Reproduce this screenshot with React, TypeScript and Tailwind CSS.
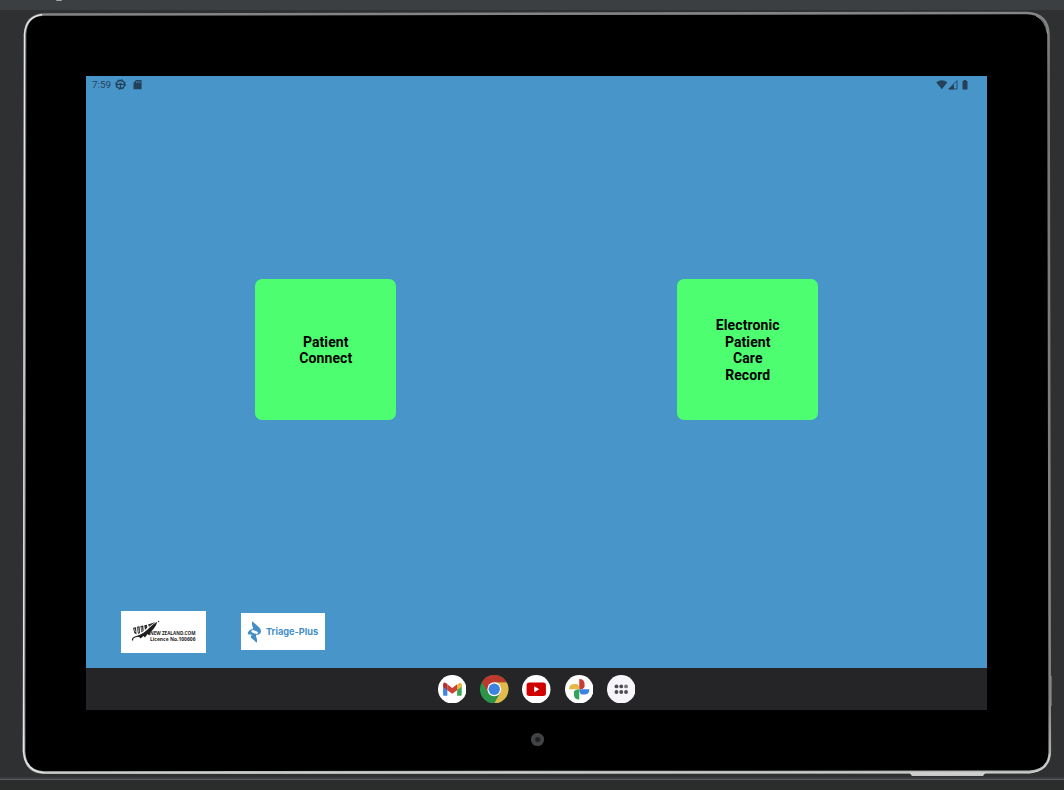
import React from "react";

function TabletCasing() {
  return (
    <svg className="absolute inset-0" width="1064" height="790" viewBox="0 0 1064 790" aria-hidden="true">
      <defs>
        <linearGradient id="rim" x1="0" y1="0" x2="0" y2="1">
          <stop offset="0" stopColor="#858585" />
          <stop offset="0.08" stopColor="#777777" />
          <stop offset="0.9" stopColor="#858585" />
          <stop offset="1" stopColor="#b8bab9" />
        </linearGradient>
      </defs>
      <path d="M909 772H986L983 776H912Z" fill="#c9c9c9" />
      <path d="M1051 676V706" stroke="#77797a" strokeWidth="1.5" />
      <path
        d="M44 14.5L1027 13Q1047.500 14 1048.500 34L1049.800 752Q1049 771 1029 771.800L44 772.500Q25.500 772 24 752L25 34Q26 15 44 14.500Z"
        fill="#000000"
        stroke="url(#rim)"
        strokeWidth="2.600"
      />
      <path d="M42 14.500Q26 17 24.500 34L23.500 752Q25 770 43 772.800" fill="none" stroke="#e6e6e6" strokeWidth="1.300" />
      <path d="M1036 16Q1045 20 1047.500 34" fill="none" stroke="#b0b0b0" strokeWidth="0.700" />
      <path d="M43 773H1030Q1048 771 1050 754" fill="none" stroke="#dadcda" strokeWidth="1" />
      <circle cx="537.500" cy="739.500" r="6.600" fill="#424345" />
      <circle cx="537.800" cy="739.500" r="2.800" fill="#25272a" />
      <circle cx="537.500" cy="739.500" r="1" fill="#111315" />
    </svg>
  );
}

function StatusBar() {
  return (
    <div className="flex h-[17px] items-center justify-between pl-[6px] pr-[19px] text-[#234259]">
      <div className="flex items-center">
        <span className="w-[23px] text-[9.8px] leading-[17px] font-normal">7:59</span>
        <svg className="block" width="11" height="11" viewBox="0 0 11 11" fill="none" stroke="currentColor">
          <circle cx="5.500" cy="5.500" r="4" strokeWidth="1.500" />
          <path d="M.5 5.500H10.500M5.500 5.500V9.500" strokeWidth="1.200" />
          <path d="M4.200 4.200H6.800L5.500 5.800Z" strokeWidth=".5" fill="currentColor" />
          <circle cx="5.500" cy="5.500" r="4.900" strokeWidth=".9" strokeDasharray="1.700 2.150" />
        </svg>
        <svg className="ml-[7px] block" width="9" height="10" viewBox="0 0 9 10">
          <path d="M3 0H8Q8.600 0 8.600 .7V9.300H.5V3Z" fill="currentColor" />
          <path d="M3.600 1.200V3M5.300 1.200V3M7 1.200V3" stroke="#4896c9" strokeWidth=".7" />
        </svg>
      </div>
      <div className="flex items-center">
        <svg className="block" width="12" height="10" viewBox="0 0 12 10" fill="currentColor">
          <path d="M.2 2.300Q5.800-1.900 11.400 2.300L5.800 9.200Z" />
        </svg>
        <svg className="block" width="10" height="10" viewBox="0 0 10 10">
          <path d="M.7 9L9 .7V9Z" fill="none" stroke="currentColor" strokeWidth=".9" />
          <path d="M.5 9.300L6 3.900V9.300Z" fill="currentColor" />
        </svg>
        <svg className="ml-[4px] block" width="6" height="10" viewBox="0 0 6 10" fill="currentColor">
          <path d="M1.700 0H4.200V1H5.500V9.500H.5V1H1.700Z" />
        </svg>
      </div>
    </div>
  );
}

function Tile({ lines }: { lines: string[] }) {
  return (
    <button className="flex h-[141px] w-[141px] flex-col items-center justify-center rounded-[7px] bg-[#4dff70] pt-[1.5px] pl-[0.5px] text-[14px] leading-[16.5px] font-bold tracking-[0.1px] text-black">
      {lines.map((line) => (
        <span key={line}>{line}</span>
      ))}
    </button>
  );
}

function NewZealandLogo() {
  return (
    <div className="flex h-[42px] w-[85px] items-start bg-white pl-[10px]">
      <svg className="mt-[9px] block shrink-0" width="29" height="22" viewBox="0 0 29 22">
        <path d="M1.500 20.500Q1 18 4 17Q12 15 17 10" fill="none" stroke="#222" strokeWidth="1.200" />
        <path d="M6 16.500Q14 14 18 8Q22 4 26.300 1.800Q24.500 8 19.500 12L18.500 15.500L16.500 14L14 17.500L12.500 16L9.500 18.500L8.500 17.300Z" fill="#1e1e1e" />
        <path d="M2 8Q3.500 7 5 7.200L5.500 14.500L3.300 13ZM5.800 6.800L8.600 6.200L9 13L7 14ZM9.400 6L12.300 5.500L12.600 10.800L10.500 12.500ZM13.200 5.300L16 4.700L16.300 7.500L14 10ZM17 4.500L24.500 2L18 6.800Z" fill="#2c2c2c" />
        <path d="M3.300 8.500L4.300 12M7 7.500L7.700 12.500M10.700 7L11.200 11" fill="none" stroke="#fff" strokeWidth=".6" />
        <circle cx="27.500" cy="1.500" r=".7" fill="#333" />
      </svg>
      <div className="-ml-[10px] mt-[19px] flex flex-col whitespace-nowrap font-['Open_Sans',sans-serif] text-[5px] leading-[6px] font-bold text-[#222]">
        <span className="origin-left scale-x-[0.92]">NEW ZEALAND.COM</span>
        <span className="origin-left scale-x-[0.98] tracking-[0.04px]">Licence No.100606</span>
      </div>
    </div>
  );
}

function TriageLogo() {
  return (
    <div className="mt-[2px] flex h-[37px] w-[84px] items-center bg-white pl-[6px] text-[#438fc5]">
      <svg className="block shrink-0" width="16" height="22" viewBox="0 0 16 22" fill="currentColor">
        <path d="M5.200 .2L11 5.200Q14.700 8.500 14 11Q13 13.800 8.800 14L11.200 11.700Q10 9.800 5.500 9L6 6.500Q4.500 4.200 5.200 .2Z" />
        <path d="M9.800 21.800L4 16.800Q3.500 14.800 5 13.800L.8 13.200Q.5 9.200 6.200 7.800L4.200 10.200Q5 12.200 9.500 13L9 15.500Q10.500 17.800 9.800 21.800Z" />
      </svg>
      <span className="ml-[3px] whitespace-nowrap pt-px font-[Inter,sans-serif] text-[9.200px] leading-[12px] font-bold">Triage-Plus</span>
    </div>
  );
}

function GmailIcon() {
  return (
    <svg viewBox="0 0 28 28">
      <circle cx="14" cy="14" r="14" fill="#fff" />
      <path d="M5 9L9.200 12.200V20.500H6Q5 20.500 5 19.500Z" fill="#4285df" />
      <path d="M18.800 12.200L23.300 9V19.500Q23.300 20.500 22.300 20.500H18.800Z" fill="#35a853" />
      <path d="M18.800 9.500L20.500 8Q23.300 6.500 23.300 10V11.500L18.800 15Z" fill="#e8b93c" />
      <path d="M9.200 9.200L14 12.800L18.800 9.200V15L14 18.500L9.200 15Z" fill="#ce4135" />
      <path d="M5 11.500V9.800Q5 6.200 8 8L9.200 9V15Z" fill="#ae342c" />
    </svg>
  );
}

function ChromeIcon() {
  return (
    <svg viewBox="0 0 28 28">
      <circle cx="14" cy="14" r="14" fill="#2d9549" />
      <path d="M14 7.200H26.200A14 14 0 0 1 14 28L19.900 17.400Z" fill="#e2b94a" />
      <path d="M1.900 7A14 14 0 0 1 26.200 7H14L8.100 17.400Z" fill="#bd382d" />
      <circle cx="14" cy="14" r="6.800" fill="#fff" />
      <circle cx="14" cy="14" r="5.600" fill="#3e82df" />
    </svg>
  );
}

function YouTubeIcon() {
  return (
    <svg viewBox="0 0 28 28">
      <circle cx="14" cy="14" r="14" fill="#fff" />
      <rect x="4.500" y="7.300" width="19" height="13.300" rx="2.600" fill="#d00000" />
      <path d="M12 11V17L17 14Z" fill="#fff" />
    </svg>
  );
}

function PhotosIcon() {
  return (
    <svg viewBox="0 0 28 28">
      <circle cx="14" cy="14" r="14" fill="#fff" />
      <path d="M14 4Q19.200 4 19.200 9.200V11.500Q18.500 14 14 14Z" fill="#c83d34" />
      <path d="M24 14Q24 19.200 18.800 19.200H16.500Q14 18.500 14 14Z" fill="#3e82df" />
      <path d="M14 24Q8.800 24 8.800 18.800V16.500Q9.500 14 14 14Z" fill="#32a453" />
      <path d="M4 14Q4 8.800 9.200 8.800H11.500Q14 9.500 14 14Z" fill="#e8b846" />
    </svg>
  );
}

function AppsIcon() {
  return (
    <svg viewBox="0 0 28 28">
      <circle cx="14" cy="14" r="14" fill="#f8f5fa" />
      <g fill="#4b4d52">
        <circle cx="9.300" cy="11.200" r="1.900" />
        <circle cx="14" cy="11.200" r="1.900" />
        <circle cx="18.700" cy="11.200" r="1.900" fill="#737579" />
        <circle cx="9.300" cy="16.700" r="1.900" />
        <circle cx="14" cy="16.700" r="1.900" />
        <circle cx="18.700" cy="16.700" r="1.900" />
      </g>
    </svg>
  );
}

function Dock() {
  return (
    <nav className="flex h-[42px] items-center justify-center gap-[13.75px] bg-[#252527] pb-[0.5px] [&>svg]:h-[28.5px] [&>svg]:w-[28.5px]">
      <GmailIcon />
      <ChromeIcon />
      <YouTubeIcon />
      <PhotosIcon />
      <AppsIcon />
    </nav>
  );
}

export default function App() {
  return (
    <div className="relative flex h-[790px] w-[1064px] flex-col overflow-hidden bg-[#2f3032] font-[Roboto,sans-serif]">
      <div className="flex h-[10px] shrink-0 justify-start bg-[#3c3f41] pl-[56px]">
        <span className="h-px w-[6px] rounded-b-full bg-[#a5a5a5]" />
      </div>
      <div className="h-[767px] shrink-0" />
      <div className="h-[13px] shrink-0 border-t-2 border-[#393b3d] bg-[#2b2d2c]">
        <div className="h-px bg-[#5a5d5f]" />
      </div>
      <TabletCasing />
      <div className="absolute inset-0 px-[86px] pt-[76px]">
        <main className="flex h-[634px] w-[901px] flex-col">
          <section className="flex h-[592px] flex-col bg-[#4896c9]">
            <StatusBar />
            <div className="mt-[186px] flex justify-between px-[169px]">
              <Tile lines={["Patient", "Connect"]} />
              <Tile lines={["Electronic", "Patient", "Care", "Record"]} />
            </div>
            <div className="mt-auto mb-[15px] flex items-start gap-[35px] pl-[35px]">
              <NewZealandLogo />
              <TriageLogo />
            </div>
          </section>
          <Dock />
        </main>
      </div>
    </div>
  );
}
